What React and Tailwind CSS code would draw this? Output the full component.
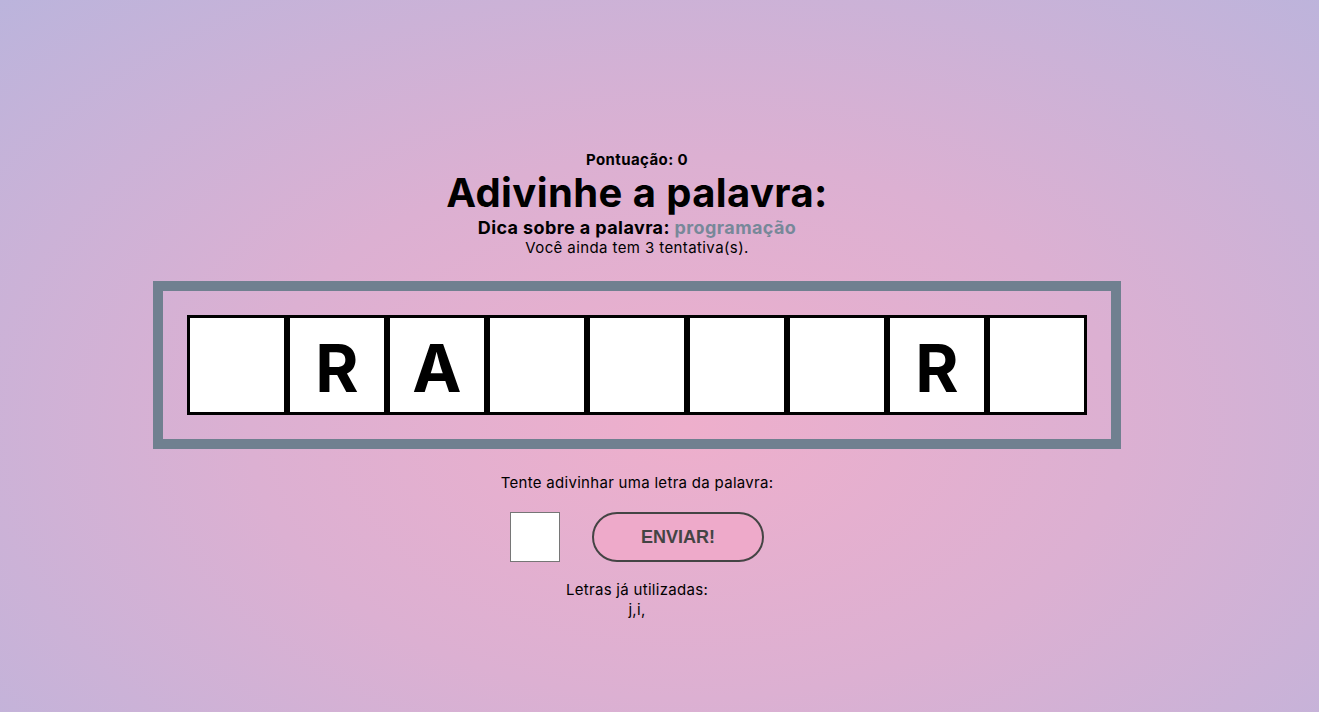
import React, { useState } from "react";

const letters = ["", "R", "A", "", "", "", "", "R", ""];

export default function App() {
  const [guess, setGuess] = useState("");

  return (
    <div className="min-h-screen w-full bg-[radial-gradient(ellipse_at_52%_60%,#eeafcc_0%,#dcb0d2_45%,#bbb4dc_100%)] font-['Inter','Noto_Sans',sans-serif] text-black">
      <div className="flex w-[1274px] flex-col items-center pt-[150px]">
        <div className="text-[15px] font-bold leading-[19px] tracking-[0.4px]">Pontuação: 0</div>
        <h1 className="text-[40px] font-bold leading-[48px] tracking-[0.4px]">Adivinhe a palavra:</h1>
        <div className="text-[18px] font-bold leading-[21px] tracking-[0.4px]">
          Dica sobre a palavra: <span className="text-[#778899]">programação</span>
        </div>
        <div className="text-[15px] leading-[20px] tracking-[0.4px]">Você ainda tem 3 tentativa(s).</div>

        <div className="mt-[23px] border-[10px] border-[#708090] p-[24px]">
          <div className="flex">
            {letters.map((l, i) => (
              <div
                key={i}
                className="flex h-[100px] w-[100px] items-center justify-center border-[3px] border-black bg-white pt-[6px] text-[66px] font-bold"
              >
                {l}
              </div>
            ))}
          </div>
        </div>

        <div className="mt-[24px] text-[15px] leading-[20px] tracking-[0.3px]">Tente adivinhar uma letra da palavra:</div>

        <div className="mt-[19px] flex items-center gap-[32px]">
          <input
            value={guess}
            maxLength={1}
            onChange={(e) => setGuess(e.target.value)}
            className="h-[50px] w-[50px] border border-[#767676] bg-white text-center text-[20px] outline-none"
          />
          <button className="h-[50px] w-[172px] rounded-full border-2 border-[#444] bg-[#eeaaca] font-['Liberation_Sans',sans-serif] text-[18px] font-bold text-[#444]">
            ENVIAR!
          </button>
        </div>

        <div className="mt-[18px] text-[15px] leading-[20px] tracking-[0.3px]">Letras já utilizadas:</div>
        <div className="text-[15px] leading-[20px] tracking-[0.3px]">j,i,</div>
      </div>
    </div>
  );
}
